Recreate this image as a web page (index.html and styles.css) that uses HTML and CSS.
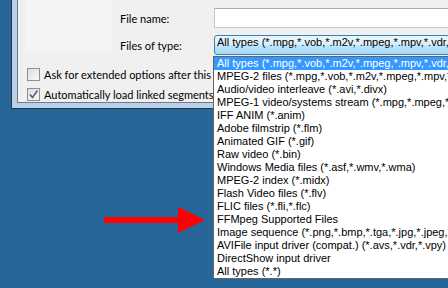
FILE: index.html
```html
<!DOCTYPE html>
<html>
<head>
<meta charset="UTF-8">
<title>Open video file</title>
<link rel="stylesheet" href="styles.css">
</head>
<body>
    <div class="window">
        <div class="content">
            <div class="top">
                <div class="places"></div>
                <div class="fields">
                    <div class="row">
                        <label class="label">File name:</label>
                        <div class="input"></div>
                    </div>
                    <div class="row">
                        <label class="label">Files of type:</label>
                        <div class="combo">All types (*.mpg,*.vob,*.m2v,*.mpeg,*.mpv,*.vdr,*.avi,*.divx)</div>
                    </div>
                </div>
            </div>
            <div class="options">
                <div class="check">
                    <span class="box"></span>
                    <span>Ask for extended options after this dialog</span>
                </div>
                <div class="check">
                    <span class="box">
                        <svg width="11" height="11" viewBox="0 0 11 11"><path d="M2 5.5 L4.5 8.5 L9.5 1.5" fill="none" stroke="#4d6185" stroke-width="1.6"/></svg>
                    </span>
                    <span>Automatically load linked segments</span>
                </div>
            </div>
        </div>
    </div>

    <ul class="list">
        <li class="selected">All types (*.mpg,*.vob,*.m2v,*.mpeg,*.mpv,*.vdr,*.avi,*.divx)</li>
        <li>MPEG-2 files (*.mpg,*.vob,*.m2v,*.mpeg,*.mpv,*.vdr)</li>
        <li>Audio/video interleave (*.avi,*.divx)</li>
        <li>MPEG-1 video/systems stream (*.mpg,*.mpeg,*.mpv)</li>
        <li>IFF ANIM (*.anim)</li>
        <li>Adobe filmstrip (*.flm)</li>
        <li>Animated GIF (*.gif)</li>
        <li>Raw video (*.bin)</li>
        <li>Windows Media files (*.asf,*.wmv,*.wma)</li>
        <li>MPEG-2 index (*.midx)</li>
        <li>Flash Video files (*.flv)</li>
        <li>FLIC files (*.fli,*.flc)</li>
        <li>FFMpeg Supported Files</li>
        <li>Image sequence (*.png,*.bmp,*.tga,*.jpg,*.jpeg,*.iff)</li>
        <li>AVIFile input driver (compat.) (*.avs,*.vdr,*.vpy)</li>
        <li>DirectShow input driver</li>
        <li>All types (*.*)</li>
    </ul>

    <svg class="arrow" width="102" height="27" viewBox="0 0 102 27">
        <rect x="0" y="10" width="75" height="6" fill="#ff0000"/>
        <polygon points="74,0 101,13 74,26" fill="#ff0000"/>
    </svg>
</body>
</html>
```

FILE: styles.css
```css
    body {
        margin: 0;
        background: #266698;
        overflow: hidden;
        width: 448px;
        height: 288px;
        position: relative;
        font: 11px Lato, "Open Sans", sans-serif;
    }
    .window {
        margin-left: 11px;
        width: 520px;
        background: #b9d1ea;
        border: 1px solid #2a3646;
        border-top: none;
        padding: 0 0 5px 5px;
    }
    .content {
        height: 102px;
        background: #f0f0f0;
        border: 1px solid #6d7b8c;
        border-top: none;
        border-right: none;
    }
    .top {
        display: flex;
        height: 58px;
    }
    .places {
        margin-left: 7px;
        width: 87px;
        height: 53px;
        background: #f4f4f4;
    }
    .fields {
        margin-left: 8px;
        padding-top: 8px;
        display: flex;
        flex-direction: column;
        gap: 7px;
    }
    .row {
        display: flex;
        align-items: center;
    }
    .label {
        width: 94px;
        color: #000;
    }
    .input {
        width: 300px;
        height: 18px;
        background: #fff;
        border: 1px solid #c5c7cc;
        border-top-color: #abadb3;
    }
    .combo {
        width: 290px;
        height: 18px;
        padding-left: 2px;
        line-height: 18px;
        border: 1px solid #3c7fb1;
        border-radius: 3px;
        background: linear-gradient(#eaf6fd, #d9f0fc 50%, #bee6fd 50%, #a7d9f5);
        font: 11px "Liberation Sans", Arial, sans-serif;
        white-space: nowrap;
        overflow: hidden;
    }
    .options {
        width: 186px;
        padding-left: 9px;
        padding-top: 6px;
        overflow: hidden;
    }
    .check {
        display: flex;
        align-items: center;
        gap: 4px;
        height: 20px;
        white-space: nowrap;
    }
    .box {
        flex: none;
        width: 11px;
        height: 11px;
        border: 1px solid #8e8f8f;
        background: linear-gradient(135deg, #dcdcdc, #fbfbfb);
        display: flex;
    }
    .list {
        position: absolute;
        left: 213px;
        top: 56px;
        width: 300px;
        margin: 0;
        padding: 0;
        list-style: none;
        background: #fff;
        border: 1px solid #646464;
        font: 11px "Liberation Sans", Arial, sans-serif;
    }
    .list li {
        height: 13px;
        line-height: 13px;
        padding-left: 3px;
        white-space: nowrap;
        overflow: hidden;
        color: #000;
    }
    .list .selected {
        background: #3399ff;
        color: #fff;
    }
    .arrow {
        position: absolute;
        left: 104px;
        top: 207px;
    }
```
